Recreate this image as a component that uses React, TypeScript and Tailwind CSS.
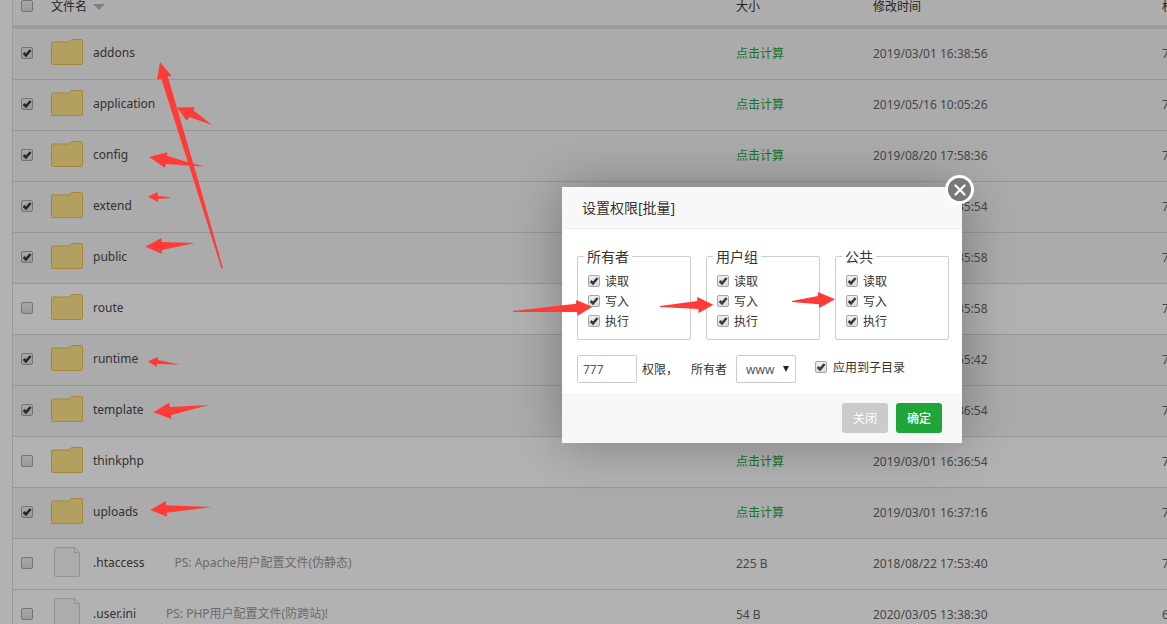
// src/App.tsx
import React from "react";

type FileItem = {
  name: string;
  kind: "folder" | "file";
  checked?: boolean;
  note?: string;
  size?: string;
  time: string;
  mode: string;
};

const files: FileItem[] = [
  { name: "addons", kind: "folder", checked: true, time: "2019/03/01 16:38:56", mode: "755" },
  { name: "application", kind: "folder", checked: true, time: "2019/05/16 10:05:26", mode: "755" },
  { name: "config", kind: "folder", checked: true, time: "2019/08/20 17:58:36", mode: "755" },
  { name: "extend", kind: "folder", checked: true, time: "2019/03/01 16:35:54", mode: "755" },
  { name: "public", kind: "folder", checked: true, time: "2019/03/01 16:35:58", mode: "755" },
  { name: "route", kind: "folder", time: "2019/03/01 16:35:58", mode: "755" },
  { name: "runtime", kind: "folder", checked: true, time: "2019/03/01 16:55:42", mode: "755" },
  { name: "template", kind: "folder", checked: true, time: "2019/03/01 16:36:54", mode: "755" },
  { name: "thinkphp", kind: "folder", time: "2019/03/01 16:36:54", mode: "755" },
  { name: "uploads", kind: "folder", checked: true, time: "2019/03/01 16:37:16", mode: "755" },
  { name: ".htaccess", kind: "file", note: "PS: Apache用户配置文件(伪静态)", size: "225 B", time: "2018/08/22 17:53:40", mode: "755" },
  { name: ".user.ini", kind: "file", note: "PS: PHP用户配置文件(防跨站)!", size: "54 B", time: "2020/03/05 13:38:30", mode: "644" },
];

const arrows = [
  "160,62 171.7,76 167.7,76.3 201,190 223,268.5 221.5,268.5 196.7,190 161.3,78.7 157,79.7",
  "177,107.5 194.7,107.3 193.3,110.3 212,125 189.3,117 186.7,120.7",
  "149.3,157 167.3,152.3 167,155.7 187,162 204,166.3 187,165.5 165.7,164 164.7,167.7",
  "148,196.7 157.3,192 158,196 169.5,197 169.5,198 158,199 158,202",
  "145.3,246.7 161.3,238 161.7,242 195,243 162,250 161.7,253.7",
  "148,361.3 157.7,357 158,360 179.5,364.5 157,364 156.7,367",
  "153.3,412.3 169,402.7 170,407 209,405 171,415 171.3,419",
  "150.3,510 165.7,501 166,505.3 212,507 166.7,512.7 167,516.7",
  "513,311 576,303.7 576.3,300 592.3,306.7 577.7,315.7 577,312 513,312",
  "660,306 697.3,301 697.3,297 713.3,304.7 698.7,313 698.3,309 660,307",
  "792,301 818,296 818,292 835,299.3 819.3,308 819,304.3 792,302",
];

const Checkbox: React.FC<React.InputHTMLAttributes<HTMLInputElement>> = (props) => (
  <span className="relative block h-3 w-3 shrink-0">
    <input
      type="checkbox"
      {...props}
      className="peer block h-3 w-3 appearance-none rounded-xs border border-[#a6a6a6] bg-linear-to-b from-[#f0f0f0] to-[#dcdcdc]"
    />
    <svg
      viewBox="0 0 12 12"
      className="pointer-events-none absolute inset-0 hidden h-3 w-3 peer-checked:block"
    >
      <path d="M2.6 6 5 8.4 9.6 3" fill="none" stroke="#3a3a3a" strokeWidth="2.5" />
    </svg>
  </span>
);

const FolderIcon = () => (
  <svg viewBox="0 0 32 26" className="h-[26px] w-8 shrink-0">
    <path
      d="M.5 4Q.5 3 1.5 3H18L20.5.5H30.5Q31.5.5 31.5 1.5V24.5Q31.5 25.5 30.5 25.5H1.5Q.5 25.5.5 24.5Z"
      fill="#ffe58a"
      stroke="#efc250"
    />
  </svg>
);

const FileIcon = () => (
  <svg viewBox="0 0 26 30" className="mx-[3px] h-[30px] w-[26px] shrink-0">
    <path
      d="M1.5.5H20.5L25.5 5.5V28.5Q25.5 29.5 24.5 29.5H1.5Q.5 29.5.5 28.5V1.5Q.5.5 1.5.5ZM20.5.5V5.5H25.5"
      fill="#f6f6f6"
      stroke="#d2d2d2"
    />
  </svg>
);

const PermissionGroup: React.FC<{ title: string }> = ({ title }) => (
  <fieldset className="flex-1 rounded-xs border border-[#ccc] pt-[5px] pr-2 pb-2 pl-2.5">
    <legend className="-ml-1 px-[3px] text-sm leading-[19px]">{title}</legend>
    {["读取", "写入", "执行"].map((item) => (
      <label key={item} className="flex h-5 items-center gap-[5px]">
        <Checkbox defaultChecked />
        <span className="pt-0.5">{item}</span>
      </label>
    ))}
  </fieldset>
);

const PermissionDialog = () => (
  <div
    role="dialog"
    aria-label="设置权限[批量]"
    className="relative w-[400px] bg-white text-xs text-[#333] shadow-[1px_1px_50px_rgba(0,0,0,0.3)]"
  >
    <button
      type="button"
      aria-label="关闭窗口"
      className="absolute -top-3 -right-3 flex h-[29px] w-[29px] items-center justify-center rounded-full border-3 border-white bg-[#787878]"
    >
      <svg viewBox="0 0 12 12" className="h-3 w-3">
        <path d="M1.5 1.5 10.5 10.5M10.5 1.5 1.5 10.5" stroke="#fff" strokeWidth="2.2" strokeLinecap="round" />
      </svg>
    </button>
    <h2 className="h-[42px] border-b border-[#eee] bg-[#f8f8f8] pl-5 text-sm leading-[42px]">
      设置权限[批量]
    </h2>
    <form>
      <div className="px-[15px] pt-[18px] pb-[11px]">
        <div className="-mr-0.5 flex gap-[15px]">
          <PermissionGroup title="所有者" />
          <PermissionGroup title="用户组" />
          <PermissionGroup title="公共" />
        </div>
        <div className="mt-[15px] flex items-center">
          <input
            type="text"
            id="mode"
            defaultValue="777"
            className="h-7 w-[60px] rounded-xs border border-[#ccc] px-[5px] text-[#555]"
          />
          <label htmlFor="mode" className="ml-[5px] w-[49px] pt-0.5">权限，</label>
          <label htmlFor="owner" className="pt-0.5">所有者</label>
          <div className="relative ml-[9px]">
            <select
              id="owner"
              defaultValue="www"
              className="block h-7 w-[60px] appearance-none rounded-xs border border-[#ccc] bg-white pt-0.5 pl-[9px] text-[#555]"
            >
              <option>www</option>
              <option>root</option>
            </select>
            <svg viewBox="0 0 6 6" className="pointer-events-none absolute top-[11px] right-[7px] h-1.5 w-1.5">
              <path d="M0 0H6L3 6Z" fill="#222" />
            </svg>
          </div>
          <label className="mb-1 ml-[19px] flex items-center gap-[6px]">
            <Checkbox defaultChecked />
            <span className="pt-0.5">应用到子目录</span>
          </label>
        </div>
      </div>
      <div className="flex justify-end gap-2 border-t border-[#edf1f2] bg-[#f6f8f8] pt-2 pr-5 pb-2.5">
        <button type="button" className="h-[30px] w-[46px] rounded-[3px] bg-[#cbcbcb] pt-0.5 text-white">
          关闭
        </button>
        <button type="button" className="h-[30px] w-[46px] rounded-[3px] bg-[#20a53a] pt-0.5 font-medium text-white">
          确定
        </button>
      </div>
    </form>
  </div>
);

const FileTable = () => (
  <table className="w-[calc(100%+95px)] table-fixed border-separate border-spacing-0 text-left">
    <colgroup>
      <col className="w-[38px]" />
      <col />
      <col className="w-[137px]" />
      <col className="w-[289px]" />
      <col className="w-[100px]" />
    </colgroup>
    <thead>
      <tr className="leading-[14px] text-[#333] *:h-[29px] *:border-b-4 *:border-[#e1e1e1] *:bg-[#f9f9f9] *:align-top *:font-normal">
        <th className="pl-2">
          <Checkbox aria-label="全选" />
        </th>
        <th>
          <span className="flex items-center gap-1.5">
            文件名
            <svg viewBox="0 0 12 6" className="h-1.5 w-3">
              <path d="M0 0H12L6 6Z" fill="#b8b8b8" />
            </svg>
          </span>
        </th>
        <th>大小</th>
        <th>修改时间</th>
        <th>权限</th>
      </tr>
    </thead>
    <tbody>
      {files.map((file) => (
        <tr
          key={file.name}
          className={
            file.checked
              ? "bg-[#f5f5f5] *:h-[51px] *:border-b *:border-[#d9d9d9]"
              : "*:h-[51px] *:border-b *:border-[#d9d9d9]"
          }
        >
          <td className="pb-0.5 pl-2">
            <Checkbox aria-label={file.name} defaultChecked={file.checked} />
          </td>
          <td className="pb-1">
            <span className="flex items-center whitespace-nowrap">
              {file.kind === "folder" ? <FolderIcon /> : <FileIcon />}
              <a href="#" className="ml-2.5 pt-0.5 text-[#484848]">{file.name}</a>
              {file.note && <span className="ml-[30px] pt-0.5 text-[#999]">{file.note}</span>}
            </span>
          </td>
          <td>
            {file.size ?? <a href="#" className="text-[#20a53a]">点击计算</a>}
          </td>
          <td>{file.time}</td>
          <td>{file.mode}</td>
        </tr>
      ))}
    </tbody>
  </table>
);

const App: React.FC = () => {
  return (
    <div className="relative h-screen overflow-hidden bg-white font-['Noto_Sans','Noto_Sans_CJK_SC',sans-serif] text-xs text-[#666]">
      <div className="ml-3 border-l border-[#ddd]">
        <FileTable />
      </div>
      <div className="absolute inset-0 flex items-start justify-end bg-black/30 pt-[187px] pr-[205px]">
        <PermissionDialog />
      </div>
      <svg className="pointer-events-none absolute inset-0 h-full w-full" fill="#ff3b38">
        {arrows.map((points) => (
          <polygon key={points} points={points} />
        ))}
      </svg>
    </div>
  );
};

export default App;
